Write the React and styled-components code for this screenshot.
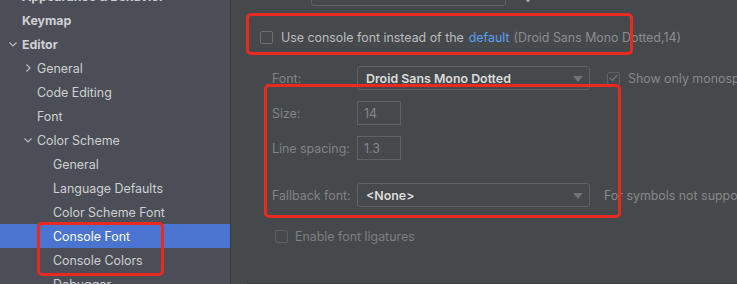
import React from "react"
import styled, { createGlobalStyle } from "styled-components"

const Global = createGlobalStyle`
  html, body { margin:0; padding:0; }
  body { width:737px; height:284px; overflow:hidden; background:#46494b; font-family:Inter, "Liberation Sans", sans-serif; font-size:12.4px; }
`

const Root = styled.div`
  position:relative;
  display:flex;
  width:737px;
  height:284px;
  overflow:hidden;
`

const Sidebar = styled.div`
  width:230px;
  flex:none;
  background:#4b4e56;
  border-right:1px solid #393b3e;
  display:flex;
  flex-direction:column;
  margin-top:-16px;
`

const Row = styled.div`
  height:24px;
  flex:none;
  display:flex;
  align-items:center;
  padding-left:${p => p.$indent}px;
  background:${p => (p.$selected ? "#4a74cf" : "transparent")};
  color:${p => (p.$selected ? "#ffffff" : "#cfd0d3")};
  font-weight:${p => (p.$bold ? 700 : 400)};
`

const Arrow = styled.span`
  width:${p => p.$w}px;
  flex:none;
  display:flex;
  align-items:center;
`

const Panel = styled.div`
  flex:1;
  display:flex;
  flex-direction:column;
  padding-left:29px;
  position:relative;
`

const TopBar = styled.div`
  margin-top:-18px;
  height:24px;
  display:flex;
  align-items:center;
  padding-left:51px;
`

const SearchField = styled.div`
  width:193px;
  height:22px;
  border:1px solid #5f6163;
  border-radius:3px;
`

const TopIcon = styled.span`
  margin-left:16px;
  margin-top:10px;
  display:flex;
`

const CheckRow = styled.div`
  display:flex;
  align-items:center;
  height:24px;
  margin-top:${p => p.$top}px;
  margin-left:${p => p.$left || 0}px;
  color:${p => p.$color};
  white-space:nowrap;
`

const Box = styled.span`
  width:13px;
  height:13px;
  box-sizing:border-box;
  border:1px solid ${p => p.$border};
  border-radius:2px;
  margin-right:${p => p.$gap}px;
  flex:none;
  display:flex;
  align-items:center;
  justify-content:center;
`

const Link = styled.span`
  color:#5a9ef5;
  margin:0 4px 0 5px;
`

const Muted = styled.span`
  color:#8c8d8f;
`

const FormRow = styled.div`
  display:flex;
  align-items:center;
  height:24px;
  margin-top:${p => p.$top}px;
  margin-left:12px;
  white-space:nowrap;
`

const Label = styled.span`
  width:85px;
  flex:none;
  color:#828385;
`

const Select = styled.div`
  width:233px;
  height:24px;
  box-sizing:border-box;
  border:1px solid #5f6163;
  border-radius:3px;
  display:flex;
  align-items:center;
  justify-content:space-between;
  padding:0 6px 0 8px;
  color:#dcdcdc;
  font-weight:600;
  flex:none;
`

const Caret = styled.span`
  width:0;
  height:0;
  border-left:5px solid transparent;
  border-right:5px solid transparent;
  border-top:6px solid #707274;
  margin-top:1px;
`

const NumField = styled.div`
  width:44px;
  height:24px;
  box-sizing:border-box;
  border:1px solid #5f6163;
  display:flex;
  align-items:center;
  padding-left:6px;
  color:#85878a;
  flex:none;
`

const Side = styled.span`
  color:#87888a;
  margin-left:${p => p.$left}px;
  display:flex;
  align-items:center;
`

const BottomLine = styled.div`
  position:absolute;
  left:16px;
  right:0;
  bottom:0;
  height:1px;
  background:#3a3c3e;
`

const Mark = styled.div`
  position:absolute;
  left:${p => p.$x}px;
  top:${p => p.$y}px;
  width:${p => p.$w}px;
  height:${p => p.$h}px;
  box-sizing:border-box;
  border:3px solid #ea2a20;
  border-radius:5px;
  pointer-events:none;
`

const Down = () => (
  <svg width="10" height="10" viewBox="0 0 10 10"><path d="M1.5 3.5 L5 7 L8.5 3.5" fill="none" stroke="#b9babd" strokeWidth="1.2" /></svg>
)
const Right = () => (
  <svg width="10" height="10" viewBox="0 0 10 10"><path d="M3.5 1.5 L7 5 L3.5 8.5" fill="none" stroke="#b9babd" strokeWidth="1.2" /></svg>
)

const tree = [
  { t: "Appearance & Behavior", i: 8, a: "right", bold: true },
  { t: "Keymap", i: 22, bold: true },
  { t: "Editor", i: 8, a: "down", bold: true },
  { t: "General", i: 23, a: "right" },
  { t: "Code Editing", i: 37 },
  { t: "Font", i: 37 },
  { t: "Color Scheme", i: 23, a: "down" },
  { t: "General", i: 53 },
  { t: "Language Defaults", i: 53 },
  { t: "Color Scheme Font", i: 53 },
  { t: "Console Font", i: 53, sel: true },
  { t: "Console Colors", i: 53 },
  { t: "Debugger", i: 53 },
]

const App = () => (
  <>
    <Global />
    <Root>
      <Sidebar>
        {tree.map((r, k) => (
          <Row key={k} $indent={r.i} $bold={r.bold} $selected={r.sel}>
            {r.a && <Arrow $w={14}>{r.a === "down" ? <Down /> : <Right />}</Arrow>}
            {r.t}
          </Row>
        ))}
      </Sidebar>
      <Panel>
        <TopBar>
          <SearchField />
          <TopIcon>
            <svg width="12" height="8" viewBox="0 0 12 8"><path d="M2 0 V4 M6 0 V4 M4 4 L6 6.5 L8 4" fill="none" stroke="#aeb0b3" strokeWidth="1.3" /></svg>
          </TopIcon>
        </TopBar>
        <CheckRow $top={19} $color="#bcbdbf">
          <Box $border="#6c6e70" $gap={8} />
          Use console font instead of the<Link>default</Link><Muted>(Droid Sans Mono Dotted,14)</Muted>
        </CheckRow>
        <FormRow $top={17}>
          <Label>Font:</Label>
          <Select>Droid Sans Mono Dotted<Caret /></Select>
          <Side $left={17}>
            <Box $border="#606264" $gap={8}>
              <svg width="9" height="8" viewBox="0 0 9 8"><path d="M1 4 L3.5 6.5 L8 1" fill="none" stroke="#6e7072" strokeWidth="1.3" /></svg>
            </Box>
            Show only monospaced fonts
          </Side>
        </FormRow>
        <FormRow $top={11}>
          <Label>Size:</Label>
          <NumField>14</NumField>
        </FormRow>
        <FormRow $top={11}>
          <Label>Line spacing:</Label>
          <NumField>1.3</NumField>
        </FormRow>
        <FormRow $top={23}>
          <Label>Fallback font:</Label>
          <Select>&lt;None&gt;<Caret /></Select>
          <Side $left={14}>For symbols not supported by the main font</Side>
        </FormRow>
        <CheckRow $top={17} $left={15} $color="#7c7e80">
          <Box $border="#5d5f61" $gap={7} />
          Enable font ligatures
        </CheckRow>
        <BottomLine />
      </Panel>
      <Mark $x={246} $y={13} $w={387} $h={42} />
      <Mark $x={264} $y={84} $w={357} $h={134} />
      <Mark $x={37} $y={222} $w={127} $h={54} />
    </Root>
  </>
)

export default App
